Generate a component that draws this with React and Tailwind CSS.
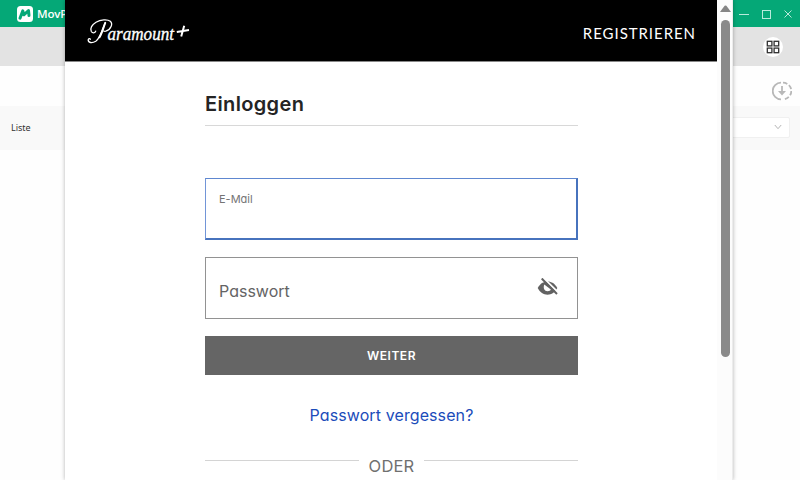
function ParamountLogo() {
  return (
    <svg className="h-[30px] w-[108px]" viewBox="0 0 108 30" fill="none" stroke="#fff" strokeLinecap="round">
      <path d="M18.300 6.500C15.500 13 13.500 22 8.800 25.200C5 27.500 1 26.800 1.200 23.800C1.400 22.300 3 22.300 3.300 23.300" strokeWidth="1.300" />
      <path d="M18.200 7C16.200 12 15 17 12.500 21.300" strokeWidth="2" />
      <path d="M8.700 15.200C8.200 17.300 5.500 17.500 4.300 15.500C2.700 12.500 5 8.600 9 6.200C13.500 3.500 20.500 3 23.300 5.200C26.200 7.700 24 13.800 18.800 15.200C17.800 15.400 17.200 15.300 16.700 15" strokeWidth="1.300" />
      <text x="20.500" y="23.500" fill="#fff" stroke="#fff" strokeWidth="0.350" fontFamily="Liberation Serif, serif" fontStyle="italic" fontSize="19.500" textLength="66.500" lengthAdjust="spacingAndGlyphs">aramount</text>
      <path d="M97.200 9.700L94.200 20.500M89.800 16L102 14" strokeWidth="2" strokeLinecap="butt" />
    </svg>
  );
}

function AppMark() {
  return (
    <svg className="size-4 shrink-0" viewBox="0 0 16 16">
      <rect width="16" height="16" rx="3.500" fill="#fff" />
      <path d="M3 12.200L5.800 4.800L6.800 8.800L11.500 4.600L12 9.500" fill="none" stroke="#05a877" strokeWidth="3" strokeLinecap="round" strokeLinejoin="round" />
    </svg>
  );
}

function HiddenEye() {
  return (
    <svg className="mb-[2px] h-[18px] w-[21px]" viewBox="0 0 21 18">
      <path d="M.7 10C3 5.500 6.500 3.400 10.500 3.400S18 5.500 20.300 10C18 14.500 14.500 16.700 10.500 16.700S3 14.500.7 10Z" fill="#626262" />
      <path d="M7.300 6.500C5.800 10 7.500 13.200 10.500 13.200C12.300 13.200 13.400 12.500 13.900 11.500Z" fill="#fff" />
      <path d="M6.500 0L21 14.400" stroke="#fff" strokeWidth="2" />
      <path d="M4.700 .5L20 16" stroke="#626262" strokeWidth="2" />
    </svg>
  );
}

function Background() {
  return (
    <div className="flex h-full flex-col bg-[#fefefe]">
      <div className="flex h-[27px] items-center justify-between bg-[#05a877] pl-[17px] pr-[7px] text-white">
        <div className="flex items-center gap-1">
          <AppMark />
          <span className="font-['Open_Sans',sans-serif] text-[11.500px] font-semibold tracking-[-0.200px]">MovP</span>
        </div>
        <svg className="h-3 w-[54px]" viewBox="0 0 54 12" fill="none" stroke="#b8eadb">
          <path d="M0 6.500H10M45.500 2.500L52.500 9.500M52.500 2.500L45.500 9.500" />
          <rect x="23.500" y="2.500" width="8" height="8" />
        </svg>
      </div>
      <div className="flex h-[39px] items-center justify-end bg-[#e3e3e3] pr-[17px]">
        <div className="flex size-5 items-center justify-center rounded-full bg-white">
          <svg className="size-[14px]" viewBox="0 0 14 14" fill="none" stroke="#303030" strokeWidth="1.300">
            <rect x="1.300" y="1.300" width="4.600" height="4.600" />
            <rect x="8.100" y="1.300" width="4.600" height="4.600" />
            <rect x="1.300" y="8.100" width="4.600" height="4.600" />
            <rect x="8.100" y="8.100" width="4.600" height="4.600" />
          </svg>
        </div>
      </div>
      <div className="flex h-10 items-center justify-end pr-2 pt-[10px]">
        <svg className="size-5" viewBox="0 0 20 20" fill="none" stroke="#b8b8b8" strokeWidth="1.800">
          <path d="M9 1.700A8.300 8.300 0 0 0 9 18.300" />
          <path d="M11 1.700A8.300 8.300 0 0 1 11 18.300" strokeDasharray="4.500 2" />
          <path d="M10 5V11" />
          <path d="M6 10H14L10 14.500Z" fill="#b8b8b8" stroke="none" />
        </svg>
      </div>
      <div className="flex h-[44px] items-center justify-between bg-[#f9f9f9] pl-[11px] pr-[10px]">
        <span className="font-['Noto_Sans',sans-serif] text-[9px] text-[#333]">Liste</span>
        <div className="mb-[2px] flex h-[21px] w-[100px] items-center justify-end rounded-[2px] border border-[#f0f0f0] bg-white pr-[7px]">
          <svg className="h-[6px] w-2" viewBox="0 0 8 6" fill="none" stroke="#b5b5b5">
            <path d="M.8 1L4 4.700L7.200 1" />
          </svg>
        </div>
      </div>
    </div>
  );
}

function LoginWindow() {
  return (
    <div className="absolute left-[65px] top-0 flex h-[480px] w-[668px] bg-white shadow-[0_0_4px_rgba(0,0,0,0.3)]">
      <div className="flex w-[652px] flex-col overflow-hidden">
        <header className="flex h-[62px] shrink-0 items-center justify-between border-b border-[#888] bg-black pl-[22px] pr-[21px]">
          <ParamountLogo />
          <span className="mt-[6px] font-['Lato',sans-serif] text-[15px] tracking-[0.950px] text-white">REGISTRIEREN</span>
        </header>
        <main className="ml-[140px] flex w-[373px] flex-col font-['Inter',sans-serif] [font-feature-settings:'cv11']">
          <h1 className="mt-[27px] h-[37px] border-b border-[#d8d8d8] pt-px text-[20px] font-semibold leading-[29px] tracking-[0.350px] text-[#242424]">Einloggen</h1>
          <div className="mt-[52px] h-[62px] border-2 border-l border-t border-[#4773bd] border-l-[#7295d7] border-t-[#5e87d0] pl-[13px] pt-[12px] text-[11px] leading-4 text-[#747474]">E-Mail</div>
          <div className="mt-[17px] flex h-[62px] items-center justify-between border border-[#929292] pl-[13px] pr-[19px]">
            <span className="mt-[5px] text-[16px] leading-5 text-[#646464]">Passwort</span>
            <HiddenEye />
          </div>
          <button className="mt-[17px] h-[39px] bg-[#656565] text-[12px] font-semibold tracking-[0.550px] text-white">WEITER</button>
          <a className="mt-[30px] self-center text-[16px] leading-5 tracking-[0.100px] text-[#1b4cba]">Passwort vergessen?</a>
          <div className="mt-[29px] flex items-start gap-[10px]">
            <span className="mt-[6px] h-px flex-1 bg-[#d4d4d4]" />
            <span className="text-[16.500px] leading-[24px] tracking-[0.200px] text-[#707070]">ODER</span>
            <span className="mt-[6px] h-px flex-1 bg-[#d4d4d4]" />
          </div>
        </main>
      </div>
      <div className="flex w-4 flex-col items-center border-r border-[#ececec] bg-[#fcfcfc] pl-px">
        <svg className="mt-[5px] h-[7px] w-[11px] shrink-0" viewBox="0 0 11 7">
          <path d="M0 7L4.600.8Q5.500 0 6.400.8L11 7Z" fill="#858585" />
        </svg>
        <div className="mt-[8px] h-[337px] w-[9px] rounded-full bg-[#8a8a8a]" />
      </div>
    </div>
  );
}

export default function App() {
  return (
    <div className="relative h-[480px] w-[800px] overflow-hidden">
      <Background />
      <LoginWindow />
    </div>
  );
}
